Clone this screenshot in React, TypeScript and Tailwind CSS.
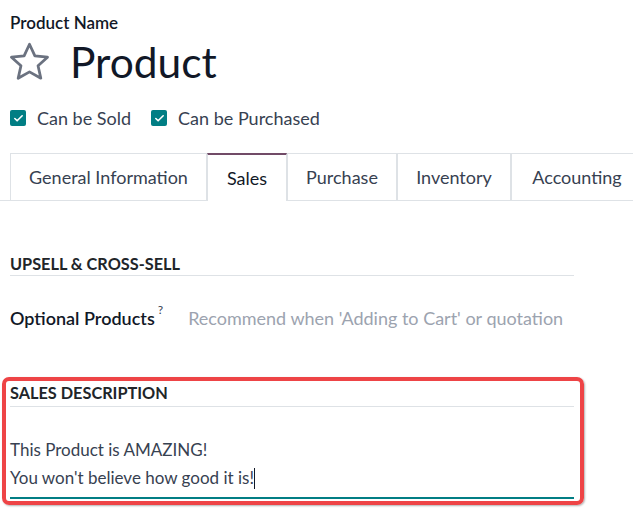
import { Check } from 'lucide-react';

const tabs = [
  { label: 'General Information', w: 'w-[197px]' },
  { label: 'Sales', w: 'w-[80px]', active: true },
  { label: 'Purchase', w: 'w-[110px]' },
  { label: 'Inventory', w: 'w-[114px]' },
  { label: 'Accounting', w: 'w-[132px]' },
];

function Checkbox({ label }: { label: string }) {
  return (
    <label className="flex items-center gap-[11px]">
      <span className="w-[16px] h-[16px] rounded-[2px] bg-[#017e84] flex items-center justify-center">
        <Check className="w-[11px] h-[11px] text-white" strokeWidth={3.5} />
      </span>
      <span className="text-[18px] text-[#374151]">{label}</span>
    </label>
  );
}

export default function App() {
  return (
    <div className="w-[633px] h-[515px] bg-white overflow-hidden font-['Lato',sans-serif] text-[#111827]">
      {/* Title */}
      <div className="pl-[10px] pt-[10px]">
        <div className="text-[17px] font-semibold leading-[26px]">Product Name</div>
        <div className="flex items-center mt-[2px] h-[46px]">
          <svg className="w-[39px] h-[39px] text-[#6b7280]" viewBox="1.5 1.8 21 20" fill="none" stroke="currentColor" strokeWidth={1.5} strokeLinejoin="round">
            <path d="M12 2.5l2.9 6.3 6.8.7-5.1 4.6 1.5 6.7L12 17.4l-6.1 3.4 1.5-6.7-5.1-4.6 6.8-.7z" />
          </svg>
          <span className="ml-[21px] pt-[3px] text-[42.5px] leading-none">Product</span>
        </div>
        <div className="flex items-center gap-[20px] mt-[22px] h-[24px]">
          <Checkbox label="Can be Sold" />
          <Checkbox label="Can be Purchased" />
        </div>
      </div>

      {/* Tabs */}
      <div className="flex mt-[23px] pl-[10px] border-b border-[#dee2e6] h-[48px]">
        {tabs.map((t) => (
          <div
            key={t.label}
            className={`${t.w} shrink-0 flex items-center justify-center text-[18px] border-l border-r ${
              t.active
                ? 'border-t-2 border-t-[#714b67] border-x-[#dee2e6] bg-white -mb-px text-[#111827]'
                : 'border-t border-[#dee2e6] text-[#374151]'
            }`}
          >
            {t.label}
          </div>
        ))}
      </div>

      {/* Upsell */}
      <div className="pl-[10px] w-[574px] mt-[53px]">
        <div className="text-[16.3px] font-bold text-[#212529] leading-[20px] pb-[1px] border-b border-[#dee2e6]">
          UPSELL &amp; CROSS-SELL
        </div>
        <div className="flex items-center mt-[28px] h-[28px]">
          <span className="text-[18px] font-semibold text-[#111827]">Optional Products</span>
          <sup className="ml-[3px] text-[12px] text-[#374151] -mt-[5px]">?</sup>
          <span className="ml-[25px] text-[18px] text-[#9ca3af]">Recommend when 'Adding to Cart' or quotation</span>
        </div>
      </div>

      {/* Sales description */}
      <div className="relative mt-[51px] ml-[10px] w-[564px]">
        <div className="text-[16.3px] font-bold text-[#212529] leading-[20px] pb-[3px] border-b border-[#dee2e6]">
          SALES DESCRIPTION
        </div>
        <div className="pt-[29px] pb-[5px] border-b-2 border-[#017e84] text-[17px] leading-[28px] text-[#374151]">
          <div>This Product is AMAZING!</div>
          <div className="flex items-center">
            You won't believe how good it is!
            <span className="inline-block w-px h-[21px] bg-[#111827]" />
          </div>
        </div>
        <div className="absolute -left-[8px] -top-[6px] w-[582px] h-[128px] border-[4px] border-[#ee4446] rounded-[7px] shadow-[1px_1px_2px_rgba(0,0,0,0.3)] pointer-events-none" />
      </div>
    </div>
  );
}
